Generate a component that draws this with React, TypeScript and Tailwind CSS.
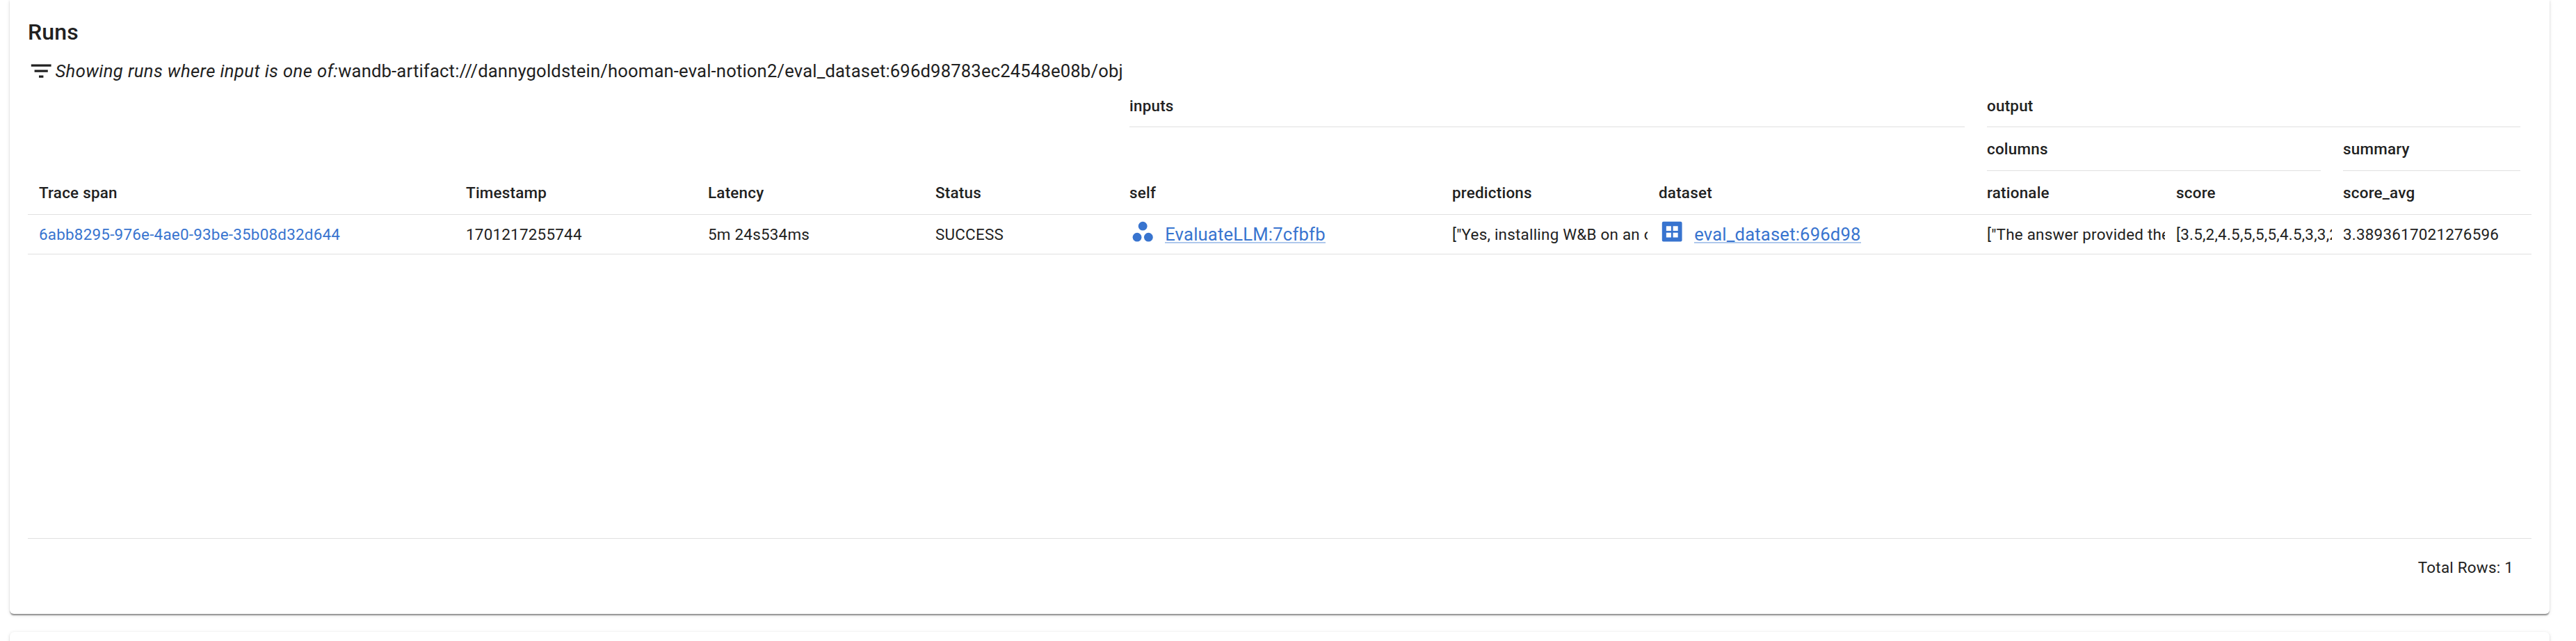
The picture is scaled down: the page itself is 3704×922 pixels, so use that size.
import React from "react";

const widths = "grid grid-cols-[614px_348px_327px_279px_464px_297px_472px_272px_240px_287px]";

function Head({ children }: { children?: React.ReactNode }) {
  return <div className="flex items-center px-4 font-medium">{children}</div>;
}

function Group({ children, className }: { children: React.ReactNode; className: string }) {
  return (
    <div className={`px-4 ${className}`}>
      <div className="flex h-full items-center border-b-[1px] border-[#e0e0e0] font-medium">{children}</div>
    </div>
  );
}

function Cell({ children }: { children: React.ReactNode }) {
  return (
    <div className="flex min-w-0 items-center pl-4">
      <div className="w-full overflow-hidden whitespace-nowrap">{children}</div>
    </div>
  );
}

function Ref({ icon, children }: { icon: React.ReactNode; children: React.ReactNode }) {
  return (
    <div className="flex min-w-0 items-center gap-[12.8px] px-4">
      {icon}
      <a className="border-b-[2px] border-[#afc8ec] pt-[2px] text-[25.6px] leading-[22px] tracking-[0.2px] text-[#3874cf]">{children}</a>
    </div>
  );
}

const shadow =
  "shadow-[0px_3.2px_1.6px_-1.6px_rgba(0,0,0,0.26),0px_1.6px_1.6px_0px_rgba(0,0,0,0.16),0px_1.6px_4.8px_0px_rgba(0,0,0,0.12)]";

export default function App() {
  return (
    <div className="flex h-[922px] w-[3704px] flex-col gap-[26px] overflow-hidden bg-white pl-[14px] font-[Roboto,sans-serif] text-[22.4px] leading-[32px] tracking-[0.24px] text-[#212121]">
      <section className={`flex h-[883px] w-[3652px] shrink-0 flex-col rounded-b-[6px] bg-white px-[26px] ${shadow}`}>
        <h2 className="mt-[26px] h-[40px] text-[32px] leading-[40px] font-medium tracking-[0.2px]">Runs</h2>
        <div className="mt-[17px] flex h-[37px] items-center pt-[1px] text-[25.6px] leading-[38px] tracking-[0.175px] whitespace-nowrap">
          <svg className="mr-[1px] h-[38.4px] w-[38.4px] shrink-0" viewBox="0 0 24 24" fill="currentColor">
            <path d="M10 18h4v-2h-4v2zM3 6v2h18V6H3zm3 7h12v-2H6v2z" />
          </svg>
          <span className="italic tracking-[0.41px]">Showing runs where input is one of:</span>
          <span>wandb-artifact:///dannygoldstein/hooman-eval-notion2/eval_dataset:696d98783ec24548e08b/obj</span>
        </div>
        <div className={`${widths} h-[63px] w-[3600px]`}>
          <Group className="col-start-5 col-end-8 pt-[2px]">inputs</Group>
          <Group className="col-start-8 col-end-11 pt-[2px]">output</Group>
        </div>
        <div className={`${widths} h-[63px] w-[3600px]`}>
          <Group className="col-start-8 col-end-10">columns</Group>
          <Group className="col-start-10 col-end-11">summary</Group>
        </div>
        <div className={`${widths} h-[63px] w-[3600px] border-b-[1px] border-[#e0e0e0]`}>
          <Head>Trace span</Head>
          <Head>Timestamp</Head>
          <Head>Latency</Head>
          <Head>Status</Head>
          <Head>self</Head>
          <Head>predictions</Head>
          <Head>dataset</Head>
          <Head>rationale</Head>
          <Head>score</Head>
          <Head>score_avg</Head>
        </div>
        <div className={`${widths} h-[57px] w-[3600px] border-b-[1px] border-[#e0e0e0]`}>
          <Cell><a className="text-[#3874cf]">6abb8295-976e-4ae0-93be-35b08d32d644</a></Cell>
          <Cell>1701217255744</Cell>
          <Cell>5m 24s534ms</Cell>
          <Cell>SUCCESS</Cell>
          <Ref
            icon={
              <svg className="mb-[8px] h-[38.4px] w-[38.4px] shrink-0" viewBox="0 0 24 24" fill="#3874cf">
                <circle cx="12" cy="7" r="4" />
                <circle cx="6.9" cy="17" r="4" />
                <circle cx="17.1" cy="17" r="4" />
              </svg>
            }
          >
            EvaluateLLM:7cfbfb
          </Ref>
          <Cell>["Yes, installing W&amp;B on an o</Cell>
          <Ref
            icon={
              <svg className="mb-[8px] h-[38.4px] w-[38.4px] shrink-0" viewBox="0 0 24 24" fill="#3874cf" fillRule="evenodd">
                <path d="M4.3 3h15.4A1.3 1.3 0 0 1 21 4.3v15.4a1.3 1.3 0 0 1-1.3 1.3H4.3A1.3 1.3 0 0 1 3 19.7V4.3A1.3 1.3 0 0 1 4.3 3zM6.8 7v4.2h4.4V7zM12.9 7v4.2h4.4V7zM6.8 13v4.2h4.4V13zM12.9 13v4.2h4.4V13z" />
              </svg>
            }
          >
            eval_dataset:696d98
          </Ref>
          <Cell>["The answer provided the</Cell>
          <Cell>[3.5,2,4.5,5,5,5,4.5,3,3,2</Cell>
          <Cell>3.3893617021276596</Cell>
        </div>
        <div className="mt-auto flex h-[109px] w-[3600px] items-start justify-end border-t-[1px] border-[#e0e0e0] pt-[25px] pr-[26px]">
          Total Rows: 1
        </div>
      </section>
      <section className={`h-[60px] w-[3652px] shrink-0 rounded-t-[6px] bg-white ${shadow}`} />
    </div>
  );
}
